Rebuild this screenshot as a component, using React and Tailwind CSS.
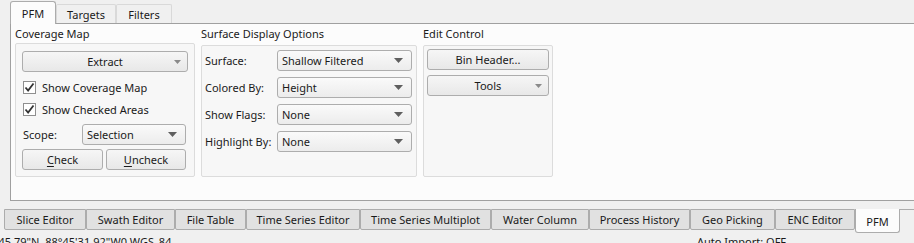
import { useState } from "react";

const bottomTabs = [
  { label: "Slice Editor", w: 82 },
  { label: "Swath Editor", w: 89 },
  { label: "File Table", w: 71 },
  { label: "Time Series Editor", w: 114 },
  { label: "Time Series Multiplot", w: 131 },
  { label: "Water Column", w: 98 },
  { label: "Process History", w: 101 },
  { label: "Geo Picking", w: 85 },
  { label: "ENC Editor", w: 80 },
];

function Arrow({ light }) {
  return light ? (
    <svg width="7" height="4" viewBox="0 0 7 4" className="shrink-0">
      <path d="M0 0h7L3.5 4z" fill="#8a8a8a" />
    </svg>
  ) : (
    <svg width="9" height="5" viewBox="0 0 9 5" className="shrink-0">
      <path d="M0 0h9L4.5 5z" fill="#5f5f5f" />
    </svg>
  );
}

function Button({ children, arrow, className = "" }) {
  return (
    <div
      className={`relative flex h-[21px] items-center justify-center rounded-[3px] border border-[#adadad] bg-gradient-to-b from-[#f6f6f6] to-[#e8e8e8] ${className}`}
    >
      <span>{children}</span>
      {arrow && (
        <span className="absolute right-[6px] top-[8px] flex">
          <Arrow light />
        </span>
      )}
    </div>
  );
}

function Combo({ value, className = "" }) {
  return (
    <div
      className={`flex h-[21px] items-center justify-between rounded-[3px] border border-[#adadad] bg-gradient-to-b from-[#fafafa] to-[#ececec] pl-[4px] pr-[8px] ${className}`}
    >
      <span>{value}</span>
      <Arrow />
    </div>
  );
}

function Check({ label }) {
  return (
    <div className="flex h-[22px] items-center gap-[6px] pl-[1px]">
      <div className="flex h-[13px] w-[13px] items-center justify-center border border-[#8f8f8f] bg-white">
        <svg width="11" height="11" viewBox="0 0 11 11">
          <path d="M1.5 5.5l2.6 3L9.5 1.5" fill="none" stroke="#333" strokeWidth="1.8" />
        </svg>
      </div>
      <span>{label}</span>
    </div>
  );
}

export default function App() {
  const [tab, setTab] = useState("PFM");

  return (
    <div className="flex h-[243px] w-[914px] flex-col overflow-hidden bg-[#f0f0f0] font-['Segoe_UI','Noto_Sans',sans-serif] text-[11px] leading-none text-[#1a1a1a]">
      {/* top tabs */}
      <div className="flex h-[23px] shrink-0 items-end pl-[10px]">
        {["PFM", "Targets", "Filters"].map((t) => (
          <div
            key={t}
            onClick={() => setTab(t)}
            className={
              t === tab
                ? "relative z-10 -mb-[1px] flex h-[23px] w-[46px] items-center justify-center rounded-t-[3px] border border-b-0 border-[#acacac] bg-[#fcfcfc]"
                : `flex h-[19px] items-center justify-center rounded-t-[2px] border border-b-0 border-[#d9d9d9] bg-[#f0f0f0] ${
                    t === "Targets" ? "w-[60px]" : "w-[56px]"
                  }`
            }
          >
            {t}
          </div>
        ))}
      </div>

      {/* pane */}
      <div className="ml-[10px] flex h-[178px] w-[920px] shrink-0 gap-[6px] border border-[#a0a0a0] bg-[#fcfcfc] px-[4px] pt-[4px]">
        <div className="flex w-[180px] flex-col">
          <div className="h-[12px] leading-[12px]">Coverage Map</div>
          <div className="mt-[3px] flex h-[134px] flex-col rounded-[2px] border border-[#dcdcdc] bg-[#f7f7f7] px-[6px] pt-[7px]">
            <Button arrow>Extract</Button>
            <div className="mt-[4px]">
              <Check label="Show Coverage Map" />
              <Check label="Show Checked Areas" />
            </div>
            <div className="mt-[4px] flex items-center">
              <span className="w-[60px] pl-[1px]">Scope:</span>
              <Combo value="Selection" className="w-[104px]" />
            </div>
            <div className="mt-[4px] flex gap-[3px]">
              <Button className="w-[81px]">
                <span className="underline underline-offset-2">C</span>heck
              </Button>
              <Button className="w-[80px]">
                <span className="underline underline-offset-2">U</span>ncheck
              </Button>
            </div>
          </div>
        </div>

        <div className="flex w-[216px] flex-col">
          <div className="h-[12px] leading-[12px]">Surface Display Options</div>
          <div className="mt-[5px] flex h-[132px] flex-col gap-[6px] rounded-[2px] border border-[#dcdcdc] bg-[#f7f7f7] pl-[3px] pt-[4px]">
            {[
              ["Surface:", "Shallow Filtered"],
              ["Colored By:", "Height"],
              ["Show Flags:", "None"],
              ["Highlight By:", "None"],
            ].map(([l, v]) => (
              <div key={l} className="flex items-center">
                <span className="w-[72px] whitespace-nowrap">{l}</span>
                <Combo value={v} className="w-[135px]" />
              </div>
            ))}
          </div>
        </div>

        <div className="flex w-[130px] flex-col">
          <div className="h-[12px] leading-[12px]">Edit Control</div>
          <div className="mt-[5px] flex h-[132px] flex-col gap-[5px] rounded-[2px] border border-[#dcdcdc] bg-[#f7f7f7] px-[3px] pt-[3px]">
            <Button>Bin Header...</Button>
            <Button arrow>Tools</Button>
          </div>
        </div>
      </div>

      {/* bottom tabs */}
      <div className="mt-[8px] flex h-[24px] shrink-0 items-start pl-[4px]">
        {bottomTabs.map((t) => (
          <div
            key={t.label}
            style={{ width: t.w }}
            className="flex h-[21px] shrink-0 items-center justify-center rounded-b-[2px] border border-[#acacac] bg-[#e1e1e1]"
          >
            {t.label}
          </div>
        ))}
        <div className="flex h-[24px] w-[45px] shrink-0 items-center justify-center rounded-b-[3px] border border-t-0 border-[#acacac] bg-[#fcfcfc] pt-[2px]">
          PFM
        </div>
        <div className="h-[1px] flex-1 bg-[#acacac]" />
      </div>

      {/* status */}
      <div className="mt-[3px] flex h-[14px] shrink-0 whitespace-nowrap">
        <span className="-ml-[4px] w-[701px]">'45.79"N, 88°45'31.92"W0 WGS_84</span>
        <span>Auto Import: OFF</span>
      </div>
    </div>
  );
}
